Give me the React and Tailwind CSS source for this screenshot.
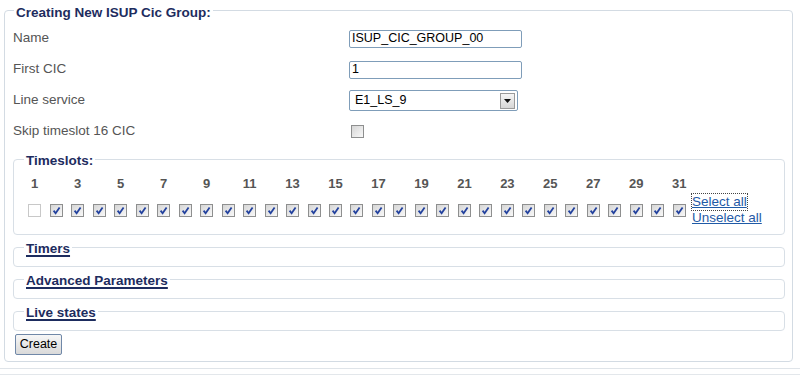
import { useState } from "react";

const slots = Array.from({ length: 31 }, (_, i) => i + 1);

function Box({ checked, faint }) {
    return (
        <span
            className={
                faint
                    ? "inline-flex h-[13px] w-[13px] items-center justify-center border border-[#c8c8c8] bg-white"
                    : "inline-flex h-[13px] w-[13px] items-center justify-center border border-[#8e8f8f] bg-linear-to-br from-[#d6d6d6] to-[#f8f8f8]"
            }
        >
            {checked && (
                <svg width="9" height="9" viewBox="0 0 9 9">
                    <path d="M1.6 4.6 L3.6 7.2 L7.6 1.4" fill="none" stroke="#23429e" strokeWidth="1.8" />
                </svg>
            )}
        </span>
    );
}

function Row({ label, children }) {
    return (
        <div className="flex h-[31px] items-center">
            <div className="w-[336px] text-[13.5px] text-[#555]">{label}</div>
            {children}
        </div>
    );
}

function SubSection({ title }) {
    return (
        <fieldset className="mt-[2px] rounded-[4px] border border-[#d8dfe6] pl-[10px] pb-[9px]">
            <legend className="px-[2px] pt-[4px] text-[13.5px] leading-4 font-bold text-[#1d2c5e] underline decoration-2 underline-offset-[2px]">
                {title}
            </legend>
        </fieldset>
    );
}

export default function App() {
    const [picked] = useState(slots.map((n) => n !== 1));

    return (
        <div className="h-[376px] w-[800px] overflow-hidden bg-white font-['Liberation_Sans',Arial,sans-serif]">
            <div className="pl-[4px] pr-[7px]">
                <fieldset className="rounded-[4px] border border-[#d3dbe3] pl-[8px] pr-[7px] pb-[6px]">
                    <legend className="ml-[1px] px-[2px] pt-[5px] text-[13.5px] leading-4 font-bold text-[#1d2c5e]">
                        Creating New ISUP Cic Group:
                    </legend>

                    {/* Form rows */}
                    <div className="pt-[2px]">
                        <Row label="Name">
                            <input
                                readOnly
                                defaultValue="ISUP_CIC_GROUP_00"
                                className="h-[18px] w-[173px] rounded-[2px] border border-[#7f9db9] px-[2px] text-[12.5px] text-black outline-none"
                            />
                        </Row>
                        <Row label="First CIC">
                            <input
                                readOnly
                                defaultValue="1"
                                className="h-[18px] w-[173px] rounded-[2px] border border-[#7f9db9] px-[2px] text-[12.5px] text-black outline-none"
                            />
                        </Row>
                        <Row label="Line service">
                            <div className="flex h-[21px] w-[169px] items-center justify-between rounded-[2px] border border-[#7f9db9] pl-[5px] pr-[2px]">
                                <span className="text-[12.5px] text-black">E1_LS_9</span>
                                <span className="flex h-[16px] w-[15px] items-center justify-center border border-[#9a9a9a] bg-linear-to-b from-[#f6f6f6] to-[#d6d6d6]">
                                    <svg width="7" height="4" viewBox="0 0 7 4">
                                        <path d="M0 0 H7 L3.5 4 Z" fill="#111" />
                                    </svg>
                                </span>
                            </div>
                        </Row>
                        <Row label="Skip timeslot 16 CIC">
                            <span className="ml-[2px] flex">
                                <Box />
                            </span>
                        </Row>
                    </div>

                    {/* Timeslots */}
                    <fieldset className="mt-[2px] rounded-[4px] border border-[#d8dfe6] pl-[10px] pb-[8px]">
                        <legend className="px-[2px] pt-[4px] text-[13.5px] leading-4 font-bold text-[#1d2c5e]">
                            Timeslots:
                        </legend>
                        <div className="pt-[4px]">
                            <div className="grid h-[21px] w-[666px] grid-cols-[repeat(31,minmax(0,1fr))] items-center">
                                {slots.map((n) => (
                                    <span key={n} className="text-center text-[13px] font-bold text-[#555]">
                                        {n % 2 === 1 ? n : ""}
                                    </span>
                                ))}
                            </div>
                            <div className="flex h-[32px] items-center">
                                <div className="grid w-[666px] grid-cols-[repeat(31,minmax(0,1fr))] items-center">
                                    {slots.map((n, i) => (
                                        <span key={n} className="flex justify-center">
                                            <Box checked={picked[i]} faint={n === 1} />
                                        </span>
                                    ))}
                                </div>
                                <div className="ml-[2px] flex flex-col text-[13.5px] leading-4 text-[#1f5aa6]">
                                    <span className="self-start underline outline-1 outline-dotted outline-[#444]">Select all</span>
                                    <span className="self-start underline">Unselect all</span>
                                </div>
                            </div>
                        </div>
                    </fieldset>

                    <SubSection title="Timers" />
                    <SubSection title="Advanced Parameters" />
                    <SubSection title="Live states" />

                    <button
                        type="button"
                        className="mt-[3px] ml-[2px] h-[21px] w-[47px] rounded-[2px] border border-[#7088a8] bg-linear-to-b from-[#f7f7f7] to-[#d9d9d9] text-[12.5px] text-black"
                    >
                        Create
                    </button>
                </fieldset>
            </div>

            <div className="mt-[6px] border-t border-[#dfe4e9] pt-[5px]">
                <div className="border-t border-[#e3e7eb]" />
            </div>
        </div>
    );
}
